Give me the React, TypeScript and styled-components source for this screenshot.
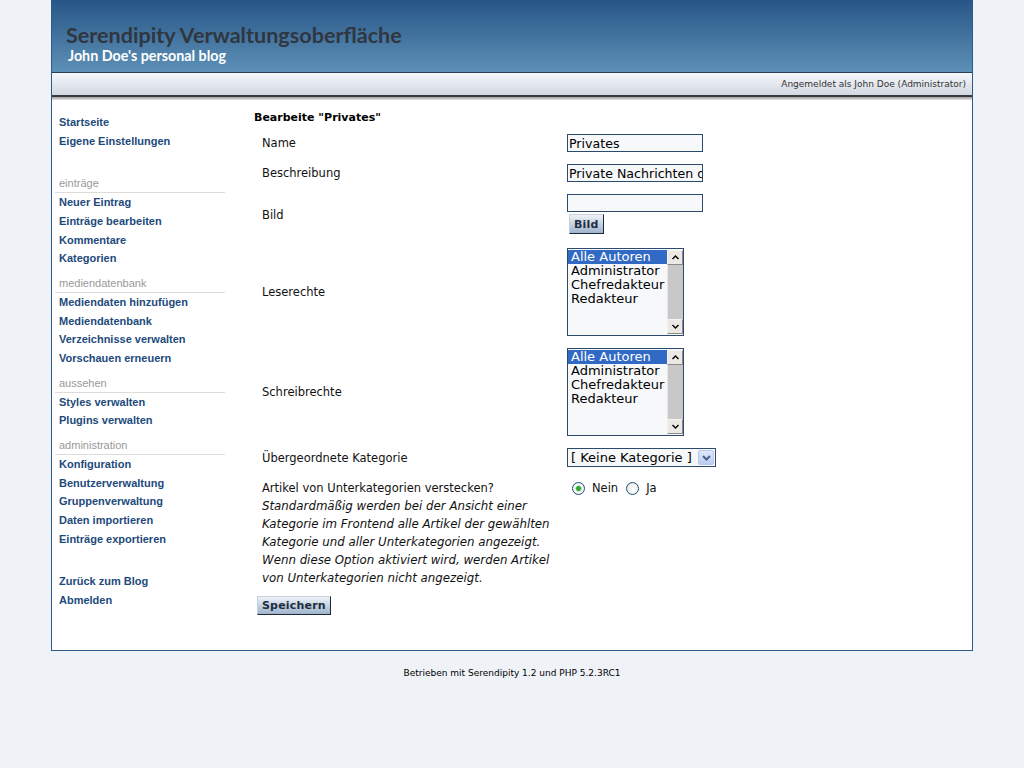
import React from "react";
import styled, { createGlobalStyle } from "styled-components";

const navGroups = [
  { title: "", links: ["Startseite", "Eigene Einstellungen"] },
  {
    title: "einträge",
    links: ["Neuer Eintrag", "Einträge bearbeiten", "Kommentare", "Kategorien"],
  },
  {
    title: "mediendatenbank",
    links: [
      "Mediendaten hinzufügen",
      "Mediendatenbank",
      "Verzeichnisse verwalten",
      "Vorschauen erneuern",
    ],
  },
  { title: "aussehen", links: ["Styles verwalten", "Plugins verwalten"] },
  {
    title: "administration",
    links: [
      "Konfiguration",
      "Benutzerverwaltung",
      "Gruppenverwaltung",
      "Daten importieren",
      "Einträge exportieren",
    ],
  },
];

const authors = ["Alle Autoren", "Administrator", "Chefredakteur", "Redakteur"];

function ListBox() {
  return (
    <ListFrame>
      <ListOptions>
        {authors.map((a, i) => (
          <ListOption key={a} $selected={i === 0}>
            {a}
          </ListOption>
        ))}
      </ListOptions>
      <ScrollBar>
        <ScrollButton>
          <svg width="7" height="5" viewBox="0 0 7 5">
            <path d="M0.5 4 L3.5 1 L6.5 4" stroke="#000" strokeWidth="1.4" fill="none" />
          </svg>
        </ScrollButton>
        <ScrollTrack />
        <ScrollButton>
          <svg width="7" height="5" viewBox="0 0 7 5">
            <path d="M0.5 1 L3.5 4 L6.5 1" stroke="#000" strokeWidth="1.4" fill="none" />
          </svg>
        </ScrollButton>
      </ScrollBar>
    </ListFrame>
  );
}

export default function App() {
  return (
    <>
      <GlobalStyle />
      <Frame>
        <Header>
          <Title>Serendipity Verwaltungsoberfläche</Title>
          <Subtitle>John Doe's personal blog</Subtitle>
        </Header>
        <UserBar>Angemeldet als John Doe (Administrator)</UserBar>
        <BarShadow />
        <Body>
          <Sidebar>
            {navGroups.map((g, i) => (
              <NavGroup key={i} $first={i === 0}>
                {g.title && <NavHeading>{g.title}</NavHeading>}
                {g.links.map((l) => (
                  <NavLink key={l} href="#">
                    {l}
                  </NavLink>
                ))}
              </NavGroup>
            ))}
            <NavGroup $first={false} $spaced>
              <NavLink href="#">Zurück zum Blog</NavLink>
              <NavLink href="#">Abmelden</NavLink>
            </NavGroup>
          </Sidebar>
          <Main>
            <PageTitle>Bearbeite "Privates"</PageTitle>
            <FormGrid>
              <Label>Name</Label>
              <div>
                <TextInput defaultValue="Privates" />
              </div>

              <Label>Beschreibung</Label>
              <div>
                <TextInput defaultValue="Private Nachrichten der Redaktion" />
              </div>

              <Label>Bild</Label>
              <FieldStack>
                <TextInput defaultValue="" />
                <Button $small>Bild</Button>
              </FieldStack>

              <Label>Leserechte</Label>
              <div>
                <ListBox />
              </div>

              <Label>Schreibrechte</Label>
              <div>
                <ListBox />
              </div>

              <Label>Übergeordnete Kategorie</Label>
              <div>
                <DropDown>
                  <DropText>[ Keine Kategorie ]</DropText>
                  <DropButton>
                    <svg width="9" height="6" viewBox="0 0 9 6">
                      <path d="M1 1 L4.5 4.5 L8 1" stroke="#4d6185" strokeWidth="2" fill="none" />
                    </svg>
                  </DropButton>
                </DropDown>
              </div>

              <Label $top>
                Artikel von Unterkategorien verstecken?
                <Hint>
                  Standardmäßig werden bei der Ansicht einer
                  <br />
                  Kategorie im Frontend alle Artikel der gewählten
                  <br />
                  Kategorie und aller Unterkategorien angezeigt.
                  <br />
                  Wenn diese Option aktiviert wird, werden Artikel
                  <br />
                  von Unterkategorien nicht angezeigt.
                </Hint>
              </Label>
              <RadioRow>
                <RadioLabel>
                  <Radio type="radio" name="hide" defaultChecked />
                  Nein
                </RadioLabel>
                <RadioLabel>
                  <Radio type="radio" name="hide" />
                  Ja
                </RadioLabel>
              </RadioRow>
            </FormGrid>
            <Button>Speichern</Button>
          </Main>
        </Body>
      </Frame>
      <Footer>Betrieben mit Serendipity 1.2 und PHP 5.2.3RC1</Footer>
    </>
  );
}

const GlobalStyle = createGlobalStyle`
  body {
    margin: 0;
    background: #eff3f8;
    font-family: "DejaVu Sans", Verdana, sans-serif;
    color: #111;
  }
`;

const Frame = styled.div`
  width: 920px;
  margin: 0 auto;
  border: 1px solid #2b5a8b;
  border-top: 0;
  background: #ffffff;
`;

const Header = styled.header`
  height: 72px;
  box-sizing: border-box;
  padding: 22px 0 0 14px;
  background: linear-gradient(180deg, #275686 0%, #5d90b7 100%);
`;

const Title = styled.h1`
  margin: 0;
  font-family: Lato, "Open Sans", sans-serif;
  font-size: 21.6px;
  line-height: 26px;
  font-weight: 700;
  color: #30363f;
`;

const Subtitle = styled.div`
  margin: 0 0 0 2px;
  font-family: Lato, "Open Sans", sans-serif;
  font-size: 14.3px;
  line-height: 15px;
  font-weight: 700;
  color: #ffffff;
`;

const UserBar = styled.div`
  height: 22px;
  box-sizing: content-box;
  border-top: 1px solid #2a3f58;
  border-bottom: 2px solid #3a3a3a;
  background: linear-gradient(180deg, #f6f7fa 0%, #d2d8e2 100%);
  padding-right: 6px;
  display: flex;
  align-items: center;
  justify-content: flex-end;
  font-size: 9px;
  color: #333;
`;

const BarShadow = styled.div`
  height: 3px;
  background: linear-gradient(180deg, #9c9c9c 0%, #e6e6e6 100%);
`;

const Body = styled.div`
  display: grid;
  grid-template-columns: 202px 1fr;
`;

const Sidebar = styled.nav`
  padding: 13px 0 0 3px;
`;

const NavGroup = styled.div<{ $first: boolean; $spaced?: boolean }>`
  width: 170px;
  margin-top: ${(p) => (p.$first ? "0" : p.$spaced ? "24px" : "7px")};
  &:nth-child(2) {
    margin-top: 25px;
  }
`;

const NavHeading = styled.div`
  padding-left: 4px;
  font-family: "Liberation Sans", Arial, sans-serif;
  font-size: 11px;
  line-height: 17px;
  color: #999;
  border-bottom: 1px solid #dcdcdc;
`;

const NavLink = styled.a`
  display: block;
  padding-left: 4px;
  font-family: "Liberation Sans", Arial, sans-serif;
  font-size: 11px;
  font-weight: 700;
  line-height: 18.67px;
  color: #1d4a7c;
  text-decoration: none;
`;

const Main = styled.main`
  padding: 10px 0 35px 0;
`;

const PageTitle = styled.h2`
  margin: 0;
  font-size: 11px;
  line-height: 15px;
  font-weight: 700;
  color: #000;
`;

const FormGrid = styled.div`
  display: grid;
  grid-template-columns: 313px 1fr;
  row-gap: 12px;
  align-items: center;
  margin: 9px 0 9px 0;
`;

const Label = styled.div<{ $top?: boolean }>`
  padding-left: 8px;
  font-size: 11.5px;
  line-height: 18px;
  color: #111;
  align-self: ${(p) => (p.$top ? "start" : "center")};
`;

const Hint = styled.div`
  font-style: italic;
  font-size: 11.8px;
`;

const FieldStack = styled.div`
  display: flex;
  flex-direction: column;
  align-items: flex-start;
  gap: 2px;
  margin-bottom: 2px;
`;

const TextInput = styled.input`
  display: block;
  box-sizing: border-box;
  width: 136px;
  height: 18px;
  margin: 0;
  padding: 0 0 0 1px;
  border: 1px solid #2c4a6b;
  background: #f6f8fa;
  font-family: "DejaVu Sans", Verdana, sans-serif;
  font-size: 12.6px;
  color: #000;
  outline: none;
`;

const Button = styled.button<{ $small?: boolean }>`
  display: block;
  box-sizing: border-box;
  height: ${(p) => (p.$small ? "20px" : "19px")};
  margin: 0 0 0 ${(p) => (p.$small ? "2px" : "3px")};
  padding: 0 4px;
  border: 1px solid;
  border-color: #c8d0da #1c2838 #1c2838 #c8d0da;
  background: linear-gradient(180deg, #eef2f7 0%, #c4d2e2 50%, #9fb4cc 100%);
  font-family: "DejaVu Sans", Verdana, sans-serif;
  font-size: 11px;
  font-weight: 700;
  color: #1e2d40;
  letter-spacing: 0.2px;
`;

const ListFrame = styled.div`
  box-sizing: border-box;
  width: 117px;
  height: 88px;
  border: 1px solid #2c4a6b;
  background: #f6f8fa;
  display: flex;
`;

const ListOptions = styled.div`
  flex: 1;
  padding-top: 1px;
`;

const ListOption = styled.div<{ $selected: boolean }>`
  padding-left: 3px;
  font-size: 13px;
  line-height: 14px;
  color: ${(p) => (p.$selected ? "#fff" : "#000")};
  background: ${(p) => (p.$selected ? "#316ac5" : "transparent")};
`;

const ScrollBar = styled.div`
  width: 16px;
  padding: 1px 0;
  display: flex;
  flex-direction: column;
`;

const ScrollButton = styled.div`
  box-sizing: border-box;
  height: 15px;
  border: 1px solid;
  border-color: #f4f4f4 #8a8a8a #8a8a8a #f4f4f4;
  background: #ece9e4;
  display: flex;
  align-items: center;
  justify-content: center;
`;

const ScrollTrack = styled.div`
  flex: 1;
  background: #c8c8c8;
  border-left: 1px solid #e8e8e8;
`;

const DropDown = styled.div`
  box-sizing: border-box;
  width: 149px;
  height: 19px;
  border: 1px solid #2c4a6b;
  background: #f6f8fa;
  display: flex;
  align-items: center;
`;

const DropText = styled.div`
  flex: 1;
  padding-left: 3px;
  font-size: 13px;
  line-height: 16px;
  color: #000;
`;

const DropButton = styled.div`
  box-sizing: border-box;
  width: 16px;
  height: 15px;
  margin-right: 1px;
  border: 1px solid #b8c8ea;
  border-radius: 2px;
  background: linear-gradient(180deg, #dfe8fb 0%, #bccdf2 100%);
  display: flex;
  align-items: center;
  justify-content: center;
`;

const RadioRow = styled.div`
  align-self: start;
  display: flex;
  gap: 8px;
  padding: 2px 0 0 5px;
`;

const RadioLabel = styled.label`
  display: flex;
  align-items: center;
  gap: 7px;
  font-size: 11.5px;
  color: #111;
`;

const Radio = styled.input`
  appearance: none;
  margin: 0;
  width: 13px;
  height: 13px;
  border-radius: 50%;
  border: 1px solid #1c5180;
  background: radial-gradient(circle at 60% 60%, #ffffff 0%, #f2f2ee 50%, #d9d9d2 100%);
  &:checked {
    background: radial-gradient(circle, #31a531 0 2px, #8fd88f 2.6px, #ffffff 3.6px, #efefea 70%, #d9d9d2 100%);
  }
`;

const Footer = styled.div`
  padding-top: 17px;
  text-align: center;
  font-size: 9px;
  color: #000;
`;
